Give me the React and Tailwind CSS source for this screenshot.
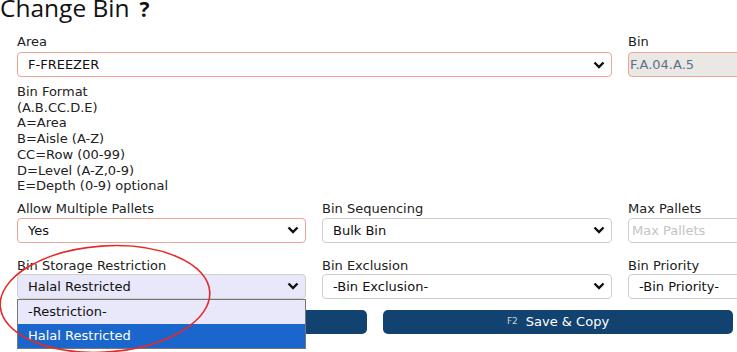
import React from "react";

const Chevron = () => (
  <svg width="12" height="8" viewBox="0 0 12 8" className="absolute right-[6px] top-1/2 -translate-y-1/2">
    <polyline points="1.5,1.5 6,6 10.5,1.5" fill="none" stroke="#111" strokeWidth="2.4" />
  </svg>
);

const Select = ({ value, border = "border-[#cfcfcf]", bg = "bg-white" }) => (
  <div className={`relative h-[25px] rounded-[4px] border ${border} ${bg} flex items-center pl-[10px] text-[13px] text-[#111]`}>
    <span>{value}</span>
    <Chevron />
  </div>
);

const Label = ({ children }) => (
  <div className="text-[13px] leading-[16px] text-[#222] h-[16px]">{children}</div>
);

export default function App() {
  return (
    <div
      className="relative w-[737px] h-[352px] overflow-hidden bg-white"
      style={{ fontFamily: "'DejaVu Sans', Verdana, sans-serif" }}
    >
      <div className="flex items-end h-[26px] -mt-[3px]" style={{ fontFamily: "'Open Sans', sans-serif" }}>
        <span className="text-[24.5px] leading-[30px] text-[#111]">Change Bin</span>
        <span className="ml-[10px] text-[21px] leading-[27px] font-bold text-[#111]">?</span>
      </div>

      <div className="pl-[17px] mt-[11px]">
        <div className="grid grid-cols-[595px_290px] gap-x-4">
          <div>
            <Label>Area</Label>
            <div className="mt-[2px]">
              <Select value="F-FREEZER" border="border-[#efa497]" />
            </div>
          </div>
          <div>
            <Label>Bin</Label>
            <div className="mt-[2px] h-[25px] rounded-[4px] border border-[#efa497] bg-[#e9e8e4] flex items-center pl-[1px] text-[13px] text-[#5c6f86]">
              F.A.04.A.5
            </div>
          </div>
        </div>

        <div className="mt-[7px] text-[13px] leading-[15.7px] text-[#222]">
          <div>Bin Format</div>
          <div>(A.B.CC.D.E)</div>
          <div>A=Area</div>
          <div>B=Aisle (A-Z)</div>
          <div>CC=Row (00-99)</div>
          <div>D=Level (A-Z,0-9)</div>
          <div>E=Depth (0-9) optional</div>
        </div>

        <div className="grid grid-cols-[289px_290px_290px] gap-x-4 mt-[7px]">
          <div>
            <Label>Allow Multiple Pallets</Label>
            <div className="mt-[1px]">
              <Select value="Yes" border="border-[#efa497]" />
            </div>
          </div>
          <div>
            <Label>Bin Sequencing</Label>
            <div className="mt-[1px]">
              <Select value="Bulk Bin" />
            </div>
          </div>
          <div>
            <Label>Max Pallets</Label>
            <div className="mt-[1px] h-[25px] rounded-[4px] border border-[#cfcfcf] bg-white flex items-center pl-[3px] text-[13px] text-[#c4c4c4]">
              Max Pallets
            </div>
          </div>
        </div>

        <div className="grid grid-cols-[289px_290px_290px] gap-x-4 mt-[15px]">
          <div>
            <Label>Bin Storage Restriction</Label>
            <div>
              <Select value="Halal Restricted" bg="bg-[#e8e8fa]" />
            </div>
          </div>
          <div>
            <Label>Bin Exclusion</Label>
            <div>
              <Select value="-Bin Exclusion-" />
            </div>
          </div>
          <div>
            <Label>Bin Priority</Label>
            <div>
              <Select value="-Bin Priority-" />
            </div>
          </div>
        </div>

        <div className="grid grid-cols-[350px_350px] gap-x-4 mt-[11px]">
          <div className="h-[24px] rounded-[5px] bg-[#124370]" />
          <div className="h-[24px] rounded-[5px] bg-[#124370] flex items-center justify-center text-white">
            <span className="text-[9px] text-[#c8d2de] mr-[8px]">F2</span>
            <span className="text-[13px]">Save &amp; Copy</span>
          </div>
        </div>
      </div>

      <div className="absolute left-[17px] top-[299px] w-[289px] border border-[#767676] bg-[#e8e8fa] text-[13px]">
        <div className="h-[24px] flex items-center pl-[10px] text-[#111]">-Restriction-</div>
        <div className="h-[24px] flex items-center pl-[10px] bg-[#1a66cc] text-white">Halal Restricted</div>
      </div>

      <svg className="absolute left-0 top-0 pointer-events-none" width="737" height="352">
        <ellipse cx="105" cy="299" rx="105" ry="53" fill="none" stroke="#e42a2a" strokeWidth="1.6" transform="rotate(-4 105 299)" />
      </svg>
    </div>
  );
}
